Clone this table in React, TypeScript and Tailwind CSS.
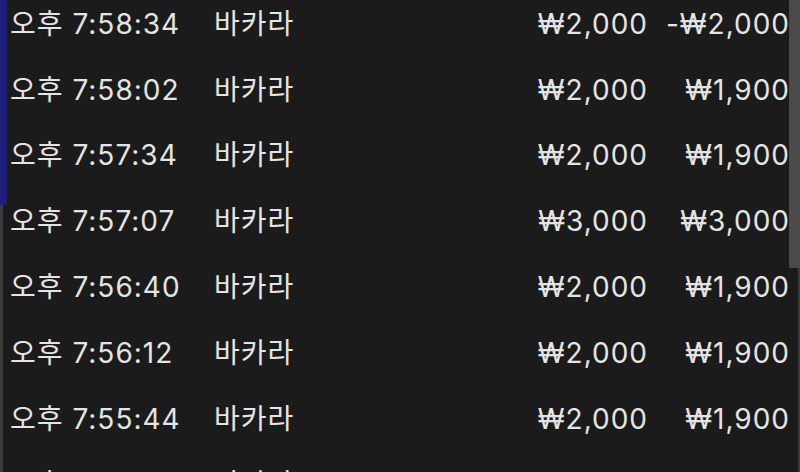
const rows = [
  { time: "오후 7:58:34", bet: "₩2,000", result: "-₩2,000" },
  { time: "오후 7:58:02", bet: "₩2,000", result: "₩1,900" },
  { time: "오후 7:57:34", bet: "₩2,000", result: "₩1,900" },
  { time: "오후 7:57:07", bet: "₩3,000", result: "₩3,000" },
  { time: "오후 7:56:40", bet: "₩2,000", result: "₩1,900" },
  { time: "오후 7:56:12", bet: "₩2,000", result: "₩1,900" },
  { time: "오후 7:55:44", bet: "₩2,000", result: "₩1,900" },
  { time: "오후 7:55:17", bet: "₩2,000", result: "₩1,900" },
];

export default function App() {
  return (
    <div
      className="relative h-[472px] w-[800px] overflow-hidden bg-[#1b1b1b] text-[28px] tracking-[1px] text-[#e4e4e4]"
      style={{ fontFamily: '"Inter", "Noto Sans CJK KR", sans-serif' }}
    >
      <div className="-mt-[9px] flex flex-col">
        {rows.map((r, i) => (
          <div key={i} className="flex h-[65.8px] items-center pl-[10px] pr-[10px]">
            <span className="w-[204px] whitespace-nowrap">{r.time}</span>
            <span className="whitespace-nowrap">바카라</span>
            <span className="ml-auto whitespace-nowrap">{r.bet}</span>
            <span className="w-[142px] whitespace-nowrap text-right">{r.result}</span>
          </div>
        ))}
      </div>

      {/* scroll indicators */}
      <div className="absolute left-0 top-0 h-full w-[3px] bg-[#3a3a3a]" />
      <div className="absolute left-0 top-0 h-[205px] w-[7px] rounded-br-[4px] bg-[#1e1d7c]" />
      <div className="absolute right-0 top-0 h-full w-[2px] bg-[#3c3c3c]" />
      <div className="absolute right-0 top-0 h-[268px] w-[11px] bg-[#4a4a4a]" />
    </div>
  );
}
